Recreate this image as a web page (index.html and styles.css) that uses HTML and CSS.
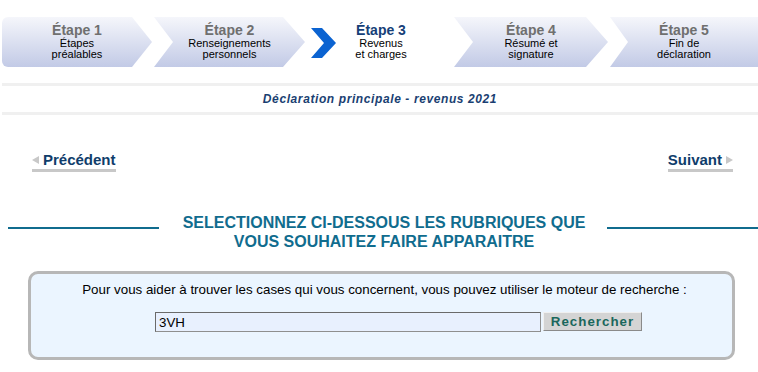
FILE: index.html
```html
<!DOCTYPE html>
<html lang="fr">
<head>
    <meta charset="UTF-8">
    <title>Déclaration principale - revenus 2021</title>
    <link rel="stylesheet" href="styles.css">
</head>
<body>
    <div class="steps">
        <div class="step step-first">
            <span class="step-title">Étape 1</span>
            <span class="step-label">Étapes<br>préalables</span>
        </div>
        <div class="step step-mid step-2">
            <span class="step-title">Étape 2</span>
            <span class="step-label">Renseignements<br>personnels</span>
        </div>
        <div class="step step-current">
            <svg class="step-arrow" width="25" height="30" viewBox="0 0 25 30">
                <polygon points="0,0 11,0 25,15 11,30 0,30 13,15" fill="#0b63d1"/>
            </svg>
            <div class="step-text">
                <span class="step-title">Étape 3</span>
                <span class="step-label">Revenus<br>et charges</span>
            </div>
        </div>
        <div class="step step-mid step-4">
            <span class="step-title">Étape 4</span>
            <span class="step-label">Résumé et<br>signature</span>
        </div>
        <div class="step step-last">
            <span class="step-title">Étape 5</span>
            <span class="step-label">Fin de<br>déclaration</span>
        </div>
    </div>

    <div class="banner">Déclaration principale - revenus 2021</div>

    <div class="nav">
        <a class="nav-link prev" href="#"><span class="tri tri-left"></span>Précédent</a>
        <a class="nav-link next" href="#">Suivant<span class="tri tri-right"></span></a>
    </div>

    <div class="section-head">
        <span class="rule"></span>
        <h2>SELECTIONNEZ CI-DESSOUS LES RUBRIQUES QUE<br>VOUS SOUHAITEZ FAIRE APPARAITRE</h2>
        <span class="rule"></span>
    </div>

    <div class="search-box">
        <p>Pour vous aider à trouver les cases qui vous concernent, vous pouvez utiliser le moteur de recherche :</p>
        <form class="search-row">
            <input type="text" value="3VH">
            <button type="button">Rechercher</button>
        </form>
    </div>
</body>
</html>
```

FILE: styles.css
```css
:root {
    --step-top: #f5f6fb;
    --step-bottom: #c2cae6;
    --navy: #0f3d6b;
    --teal: #106c8e;
    --rule-grey: #f0f0f0;
}

body {
    margin: 0;
    font-family: "Liberation Sans", Arial, sans-serif;
    background: #fff;
    color: #000;
}

/* steps bar */
.steps {
    display: flex;
    padding: 17px 0 0 2px;
    height: 50px;
}

.step {
    height: 50px;
    display: flex;
    flex-direction: column;
    align-items: center;
    padding-top: 6px;
    box-sizing: border-box;
    text-align: center;
    background: linear-gradient(var(--step-top), var(--step-bottom));
}

.step-title {
    font-size: 14px;
    font-weight: bold;
    line-height: 15px;
    color: #6f6f6f;
}

.step-label {
    font-size: 11px;
    line-height: 11px;
}

.step-first {
    width: 150px;
    border-radius: 6px 0 0 6px;
    clip-path: polygon(0 0, calc(100% - 20px) 0, 100% 50%, calc(100% - 20px) 100%, 0 100%);
}

.step-mid {
    clip-path: polygon(0 0, calc(100% - 22px) 0, 100% 50%, calc(100% - 22px) 100%, 0 100%, 19px 50%);
}

.step-2 {
    width: 151px;
    margin-left: 2px;
}

.step-current {
    width: 146px;
    margin-left: 3px;
    background: none;
    display: grid;
    align-items: start;
    padding-top: 0;
}

.step-current .step-arrow {
    grid-area: 1 / 1;
    justify-self: start;
    margin: 11px 0 0 3px;
}

.step-text {
    grid-area: 1 / 1;
    display: flex;
    flex-direction: column;
    align-items: center;
    padding-top: 6px;
}

.step-current .step-title {
    color: #163f78;
}

.step-4 {
    width: 154px;
}

.step-last {
    flex: 1;
    margin-left: 2px;
    clip-path: polygon(0 0, 100% 0, 100% 100%, 0 100%, 18px 50%);
}

/* banner */
.banner {
    margin: 16px 0 0 2px;
    border-top: 3px solid var(--rule-grey);
    border-bottom: 3px solid var(--rule-grey);
    height: 26px;
    line-height: 26px;
    text-align: center;
    font-size: 12px;
    font-weight: bold;
    font-style: italic;
    letter-spacing: 0.6px;
    color: #1a3f72;
}

/* prev / next */
.nav {
    display: flex;
    justify-content: space-between;
    padding: 36px 25px 0 32px;
}

.nav-link {
    display: flex;
    align-items: center;
    gap: 4px;
    font-size: 15px;
    font-weight: bold;
    color: var(--navy);
    text-decoration: none;
    line-height: 17px;
    padding-bottom: 1px;
    border-bottom: 3px solid #c8c8c8;
}

.tri {
    width: 0;
    height: 0;
    border-top: 4px solid transparent;
    border-bottom: 4px solid transparent;
}

.tri-left {
    border-right: 7px solid #c8c8c8;
}

.tri-right {
    border-left: 7px solid #c8c8c8;
}

/* section heading */
.section-head {
    display: flex;
    align-items: flex-start;
    gap: 24px;
    margin: 41px 0 0 8px;
}

.section-head .rule {
    flex: 1;
    height: 2px;
    background: var(--teal);
    margin-top: 14px;
}

.section-head h2 {
    margin: 0 -2px 0 0;
    font-size: 16px;
    line-height: 19px;
    font-weight: bold;
    text-align: center;
    color: var(--teal);
}

/* search box */
.search-box {
    margin: 20px 0 0 28px;
    width: 707px;
    height: 89px;
    box-sizing: border-box;
    border: 3px solid #b7b7b7;
    border-radius: 10px;
    background: #ebf5ff;
    text-align: center;
}

.search-box p {
    margin: 8px 0 0 6px;
    font-size: 10pt;
    line-height: 16px;
}

.search-row {
    display: flex;
    align-items: flex-start;
    gap: 2px;
    margin-top: 14px;
    padding-left: 124px;
}

.search-row input {
    width: 386px;
    height: 20px;
    box-sizing: border-box;
    margin: 0;
    padding: 0 3px;
    font-family: inherit;
    font-size: 10pt;
    background: #e8f0fe;
    border: 1px solid #8f8f8f;
    border-top-color: #6a6a6a;
    border-left-color: #6a6a6a;
}

.search-row button {
    width: 99px;
    height: 19px;
    margin: 0;
    padding: 0;
    font-family: inherit;
    font-size: 10pt;
    font-weight: bold;
    letter-spacing: 1px;
    color: #1a675c;
    background: #d4d4d4;
    border: 1px solid #8a8a8a;
    border-top-color: #f0f0f0;
    border-left-color: #f0f0f0;
}
```
